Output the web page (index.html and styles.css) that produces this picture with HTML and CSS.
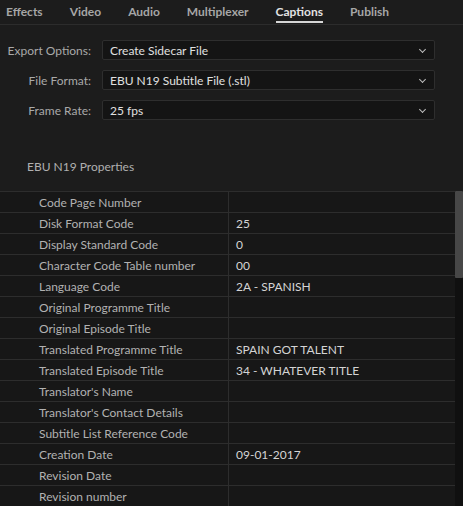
FILE: index.html
```html
<!DOCTYPE html>
<html lang="en">
<head>
    <meta charset="UTF-8">
    <title>Captions Export</title>
    <link rel="stylesheet" href="styles.css">
</head>
<body>
    <!-- Tabs -->
    <div class="tabs">
        <span class="tab">Effects</span>
        <span class="tab">Video</span>
        <span class="tab">Audio</span>
        <span class="tab">Multiplexer</span>
        <span class="tab active">Captions</span>
        <span class="tab">Publish</span>
    </div>

    <!-- Options -->
    <div class="options">
        <div class="option-row">
            <label class="option-label">Export Options:</label>
            <div class="select">Create Sidecar File <span class="chevron"></span></div>
        </div>
        <div class="option-row">
            <label class="option-label">File Format:</label>
            <div class="select">EBU N19 Subtitle File (.stl) <span class="chevron"></span></div>
        </div>
        <div class="option-row">
            <label class="option-label">Frame Rate:</label>
            <div class="select">25 fps <span class="chevron"></span></div>
        </div>
    </div>

    <h2 class="section-title">EBU N19 Properties</h2>

    <div class="props">
        <table class="props-table">
            <tbody>
                <tr><td>Code Page Number</td><td></td></tr>
                <tr><td>Disk Format Code</td><td>25</td></tr>
                <tr><td>Display Standard Code</td><td>0</td></tr>
                <tr><td>Character Code Table number</td><td>00</td></tr>
                <tr><td>Language Code</td><td>2A - SPANISH</td></tr>
                <tr><td>Original Programme Title</td><td></td></tr>
                <tr><td>Original Episode Title</td><td></td></tr>
                <tr><td>Translated Programme Title</td><td>SPAIN GOT TALENT</td></tr>
                <tr><td>Translated Episode Title</td><td>34 - WHATEVER TITLE</td></tr>
                <tr><td>Translator's Name</td><td></td></tr>
                <tr><td>Translator's Contact Details</td><td></td></tr>
                <tr><td>Subtitle List Reference Code</td><td></td></tr>
                <tr><td>Creation Date</td><td>09-01-2017</td></tr>
                <tr><td>Revision Date</td><td></td></tr>
                <tr><td>Revision number</td><td></td></tr>
            </tbody>
        </table>
        <div class="scrollbar"><div class="thumb"></div></div>
    </div>
</body>
</html>
```

FILE: styles.css
```css
html, body {
    height: 100%;
}
body {
    margin: 0;
    background: #1c1c1c;
    color: #b4b4b4;
    font-family: Lato, "Open Sans", Arial, sans-serif;
    font-size: 12px;
    overflow: hidden;
}
.tabs {
    display: flex;
    height: 24px;
    border-bottom: 1px solid #2c2c2c;
    padding-left: 6px;
}
.tab {
    position: relative;
    line-height: 24px;
    color: #a6a6a6;
    font-weight: 700;
    margin-right: 27px;
}
.tab.active {
    color: #e2e2e2;
}
.tab.active::after {
    content: "";
    position: absolute;
    left: 0;
    right: 0;
    top: 21px;
    height: 2px;
    background: #d6d6d6;
}
.options {
    padding-top: 15px;
}
.option-row {
    display: flex;
    align-items: center;
    margin-bottom: 10px;
}
.option-label {
    width: 91px;
    text-align: right;
    margin-right: 11px;
    color: #a9a9a9;
}
.select {
    position: relative;
    height: 20px;
    line-height: 19px;
    padding-left: 7px;
    border: 1px solid #2e2e2e;
    border-radius: 2px;
    background: #141414;
    color: #e0e0e0;
    box-sizing: border-box;
    width: 333px;
}
.chevron {
    position: absolute;
    right: 9px;
    top: 6px;
    width: 4px;
    height: 4px;
    border-right: 1px solid #bdbdbd;
    border-bottom: 1px solid #bdbdbd;
    transform: rotate(45deg);
}
.section-title {
    font-size: 12px;
    font-weight: 400;
    color: #b0b0b0;
    margin: 0;
    padding: 29px 0 0 27px;
    height: 32px;
}
.props {
    display: flex;
}
.props-table {
    width: 455px;
    border-collapse: collapse;
    border-top: 1px solid #2d2d2d;
    background: #171717;
}
.props-table td {
    height: 20px;
    padding: 0;
    border-bottom: 1px solid #2d2d2d;
    color: #b2b2b2;
}
.props-table td:first-child {
    width: 189px;
    padding-left: 39px;
    border-right: 1px solid #2d2d2d;
}
.props-table td:last-child {
    padding-left: 7px;
    color: #d4d4d4;
}
.scrollbar {
    width: 8px;
    background: #101010;
}
.thumb {
    height: 87px;
    background: #474747;
    border-radius: 1px;
}
```
